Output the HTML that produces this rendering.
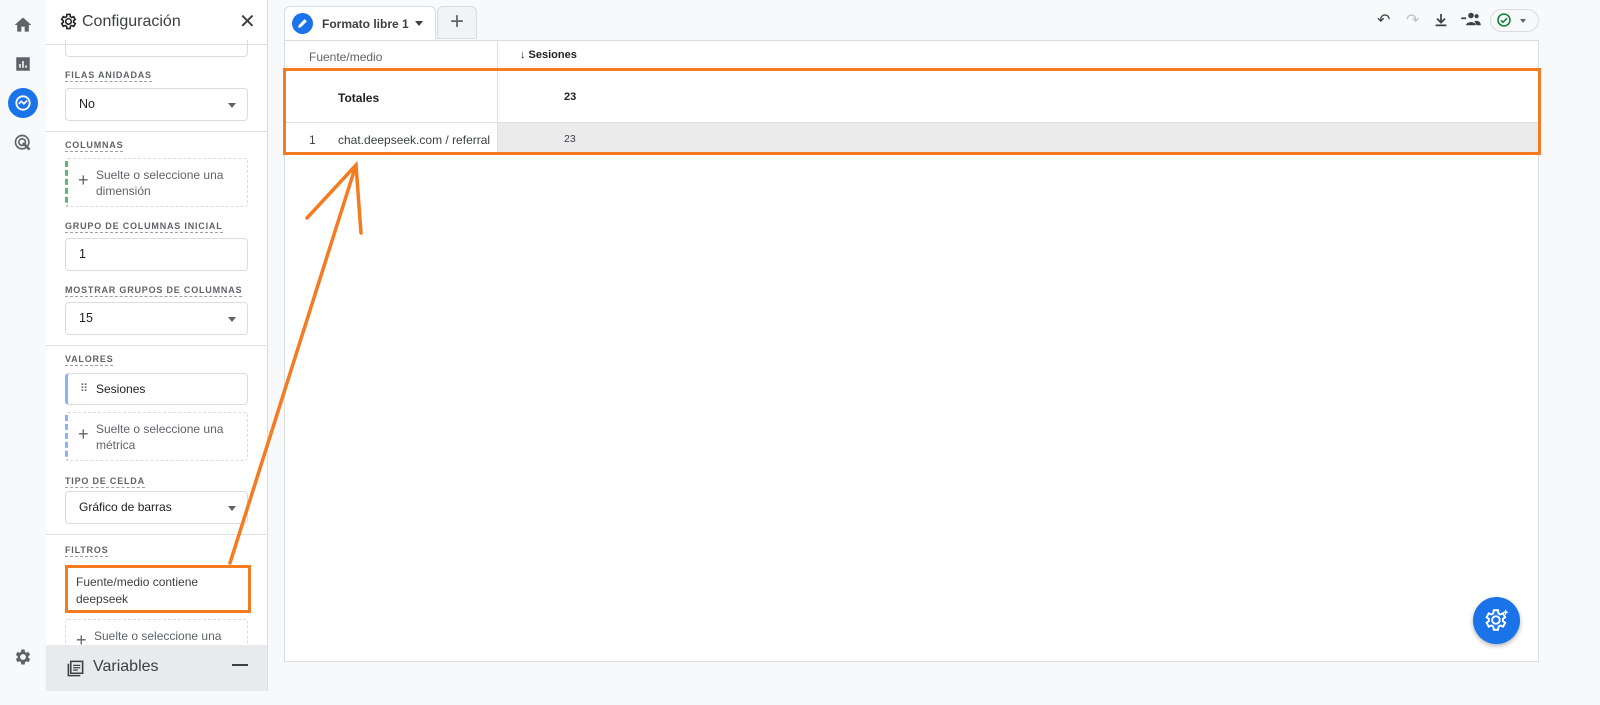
<!DOCTYPE html>
<html><head><meta charset="utf-8"><style>
*{box-sizing:border-box;margin:0;padding:0}
body{width:1600px;height:705px;overflow:hidden;background:#f8f9fa;font-family:"Liberation Sans",Arial,sans-serif;color:#202124;position:relative}
.abs{position:absolute}
.rail{left:0;top:0;width:46px;height:705px;background:#f8f9fa}
.side{left:46px;top:0;width:222px;height:691px;background:#fff;border-right:1px solid #dadce0;overflow:hidden}
.lbl{position:absolute;left:19px;font-size:9px;letter-spacing:.8px;color:#5f6368;font-weight:bold;border-bottom:1px dashed #9aa0a6;padding-bottom:1px}
.box{position:absolute;left:19px;width:183px;border:1px solid #dadce0;border-radius:4px;font-size:12.5px;color:#202124;padding-left:13px}
.dash{position:absolute;left:19px;width:183px;border:1px dashed #dadce0;border-radius:3px;font-size:12px;color:#5f6368;padding:8px 0 0 28px;line-height:16px}
.sep{position:absolute;left:0;width:222px;border-top:1px solid #e0e0e0}
.caret{position:absolute;right:11px;top:50%;margin-top:-2px;border:4px solid transparent;border-top:5px solid #5f6368;border-bottom:0}
.plus{position:absolute;left:10px;font-size:18px;color:#5f6368}
.card{left:284px;top:40px;width:1255px;height:622px;background:#fff;border:1px solid #dadce0}
</style></head><body>
<div class="abs rail">
<svg class="abs" style="left:13px;top:15px" width="20" height="20" viewBox="0 0 24 24"><path d="M10 20v-6h4v6h5v-8h3L12 3 2 12h3v8z" fill="#5f6368"/></svg>
<svg class="abs" style="left:14px;top:55px" width="18" height="18" viewBox="0 0 24 24"><path d="M3 3h18v18H3z" fill="#5f6368"/><path d="M7 17v-5h2v5zM11 17V8h2v9zM15 17v-3h2v3z" fill="#fff"/></svg>
<div class="abs" style="left:8px;top:88px;width:30px;height:30px;border-radius:50%;background:#1a73e8"></div>
<svg class="abs" style="left:13px;top:93px" width="20" height="20" viewBox="0 0 24 24"><circle cx="12" cy="12" r="8" fill="none" stroke="#fff" stroke-width="2.2"/><path d="M7 13l3-3 3 3 4-4" fill="none" stroke="#fff" stroke-width="2"/></svg>
<svg class="abs" style="left:13px;top:133px" width="20" height="20" viewBox="0 0 24 24"><circle cx="11" cy="11" r="8" fill="none" stroke="#5f6368" stroke-width="2"/><circle cx="11" cy="11" r="4" fill="none" stroke="#5f6368" stroke-width="2"/><path d="M12 12l8 8" stroke="#5f6368" stroke-width="3"/></svg>
<svg class="abs" style="left:13px;top:647px" width="20" height="20" viewBox="0 0 24 24"><path d="M19.4 13a7.5 7.5 0 000-2l2.1-1.6-2-3.5-2.5 1a7 7 0 00-1.7-1L15 3h-4l-.4 2.9a7 7 0 00-1.7 1l-2.5-1-2 3.5L6.5 11a7.5 7.5 0 000 2l-2.1 1.6 2 3.5 2.5-1a7 7 0 001.7 1L11 21h4l.4-2.9a7 7 0 001.7-1l2.5 1 2-3.5zM13 15.5a3.5 3.5 0 110-7 3.5 3.5 0 010 7z" fill="#5f6368" transform="translate(-1 0)"/></svg>
</div>
<div class="abs side">
<div class="abs" style="left:0;top:0;width:222px;height:45px;border-bottom:1px solid #e0e0e0"></div>
<svg class="abs" style="left:13px;top:12px" width="19" height="19" viewBox="0 0 24 24"><path d="M19.4 13a7.5 7.5 0 000-2l2.1-1.6-2-3.5-2.5 1a7 7 0 00-1.7-1L15 3h-4l-.4 2.9a7 7 0 00-1.7 1l-2.5-1-2 3.5L6.5 11a7.5 7.5 0 000 2l-2.1 1.6 2 3.5 2.5-1a7 7 0 001.7 1L11 21h4l.4-2.9a7 7 0 001.7-1l2.5 1 2-3.5zM13 15.5a3.5 3.5 0 110-7 3.5 3.5 0 010 7z" fill="none" stroke="#202124" stroke-width="2" transform="translate(-1 0)"/></svg>
<div class="abs" style="left:36px;top:13px;font-size:16px;color:#3c4043">Configuración</div>
<div class="abs" style="left:193px;top:9px;font-size:20px;color:#3c4043">✕</div>
<div class="box" style="top:40px;height:17px;border-top:0;border-radius:0 0 4px 4px"></div>
<div class="lbl" style="top:70px">FILAS ANIDADAS</div>
<div class="box" style="top:88px;height:33px;line-height:31px">No<span class="caret"></span></div>
<div class="sep" style="top:131px"></div>
<div class="lbl" style="top:140px">COLUMNAS</div>
<div class="dash" style="top:158px;height:49px;border-left:3px dashed #5bb974">Suelte o seleccione una dimensión<span class="plus" style="top:13px">+</span></div>
<div class="lbl" style="top:221px">GRUPO DE COLUMNAS INICIAL</div>
<div class="box" style="top:238px;height:33px;line-height:31px">1</div>
<div class="lbl" style="top:285px">MOSTRAR GRUPOS DE COLUMNAS</div>
<div class="box" style="top:302px;height:33px;line-height:31px">15<span class="caret"></span></div>
<div class="sep" style="top:345px"></div>
<div class="lbl" style="top:354px">VALORES</div>
<div class="box" style="top:373px;height:32px;line-height:30px;border-left:3px solid #8ab4f8;padding-left:28px;font-size:12px">Sesiones<span class="abs" style="left:12px;top:0;font-size:11px;color:#5f6368">⠿</span></div>
<div class="dash" style="top:412px;height:49px;border-left:3px dashed #8ab4f8">Suelte o seleccione una métrica<span class="plus" style="top:13px">+</span></div>
<div class="lbl" style="top:476px">TIPO DE CELDA</div>
<div class="box" style="top:491px;height:33px;line-height:31px;font-size:12px">Gráfico de barras<span class="caret"></span></div>
<div class="sep" style="top:534px"></div>
<div class="lbl" style="top:545px">FILTROS</div>
<div class="abs" style="left:19px;top:565px;width:186px;height:48px;border:3px solid #f47b20;font-size:12px;color:#3c4043;padding:6px 0 0 8px;line-height:17px">Fuente/medio contiene deepseek</div>
<div class="dash" style="top:619px;height:40px;padding-top:8px">Suelte o seleccione una<span class="plus" style="top:12px">+</span></div>
</div>
<div class="abs" style="left:46px;top:645px;width:221px;height:46px;background:#e8eaed"></div>
<svg class="abs" style="left:66px;top:659px" width="19" height="19" viewBox="0 0 24 24"><path d="M6 3h15v15H6z M3 6v15h15" fill="none" stroke="#3c4043" stroke-width="2"/><path d="M9 8h9M9 11h9M9 14h6" stroke="#3c4043" stroke-width="1.6"/></svg>
<div class="abs" style="left:93px;top:658px;font-size:16px;color:#3c4043">Variables</div>
<div class="abs" style="left:232px;top:664px;width:16px;height:2px;background:#3c4043"></div>
<div class="abs" style="left:0;top:691px;width:1600px;height:14px;background:#f8f9fa"></div>

<div class="abs" style="left:284px;top:6px;width:152px;height:35px;background:#fff;border:1px solid #dadce0;border-bottom:0;border-radius:6px 6px 0 0"></div>
<div class="abs" style="left:292px;top:13px;width:21px;height:21px;border-radius:50%;background:#1a73e8"></div>
<svg class="abs" style="left:296px;top:17px" width="13" height="13" viewBox="0 0 24 24"><path d="M4 20l1-5L16 4l4 4L9 19z" fill="#fff"/></svg>
<div class="abs" style="left:322px;top:17px;font-size:12px;font-weight:bold;color:#3c4043">Formato libre 1</div>
<div class="abs" style="left:415px;top:21px;border:4px solid transparent;border-top:5px solid #3c4043"></div>
<div class="abs" style="left:437px;top:6px;width:40px;height:33px;background:#f1f3f4;border:1px solid #dadce0;border-radius:6px 6px 0 0;font-size:24px;color:#5f6368;text-align:center;line-height:30px">+</div>
<div class="abs" style="left:1377px;top:10px;font-size:16px;color:#3c4043">↶</div>
<div class="abs" style="left:1406px;top:10px;font-size:16px;color:#bdc1c6">↷</div>
<svg class="abs" style="left:1433px;top:12px" width="16" height="16" viewBox="0 0 24 24"><path d="M12 3v12M6 10l6 6 6-6M4 20h16" fill="none" stroke="#3c4043" stroke-width="2.6"/></svg>
<svg class="abs" style="left:1460px;top:12px" width="22" height="14" viewBox="0 0 30 20"><path d="M1 9h7" stroke="#3c4043" stroke-width="2.5"/><circle cx="15" cy="5" r="4" fill="#3c4043"/><circle cx="23" cy="6" r="3" fill="#3c4043"/><path d="M8 19c0-6 14-6 14 0zM20 13c4-1 9 0 9 6h-6" fill="#3c4043"/></svg>
<div class="abs" style="left:1490px;top:9px;width:49px;height:23px;border:1px solid #dadce0;border-radius:12px;background:#f8f9fa"></div>
<svg class="abs" style="left:1496px;top:12px" width="16" height="16" viewBox="0 0 24 24"><circle cx="12" cy="12" r="9" fill="none" stroke="#188038" stroke-width="2.4"/><path d="M7.5 12.5l3 3 6-6" fill="none" stroke="#188038" stroke-width="2.4"/></svg>
<div class="abs" style="left:1520px;top:19px;border:3.5px solid transparent;border-top:4px solid #5f6368"></div>

<div class="abs card"></div>
<div class="abs" style="left:497px;top:41px;width:1px;height:112px;background:#e0e0e0"></div>
<div class="abs" style="left:309px;top:50px;font-size:12px;color:#5f6368">Fuente/medio</div>
<div class="abs" style="left:520px;top:49px;font-size:11px;font-weight:bold;color:#202124">↓ Sesiones</div>
<div class="abs" style="left:285px;top:122px;width:1253px;height:1px;background:#e0e0e0"></div>
<div class="abs" style="left:498px;top:123px;width:1040px;height:30px;background:#ebebeb"></div>
<div class="abs" style="left:338px;top:91px;font-size:12px;font-weight:bold">Totales</div>
<div class="abs" style="left:564px;top:91px;font-size:11px;font-weight:bold">23</div>
<div class="abs" style="left:309px;top:133px;font-size:12px;color:#3c4043">1</div>
<div class="abs" style="left:338px;top:133px;font-size:12px;color:#3c4043">chat.deepseek.com / referral</div>
<div class="abs" style="left:564px;top:133px;font-size:10.5px;color:#3c4043">23</div>
<div class="abs" style="left:283px;top:68px;width:1258px;height:87px;border:3.5px solid #f47b20"></div>
<svg class="abs" style="left:0;top:0" width="1600" height="705"><g stroke="#f47b20" stroke-width="3.5" fill="none" stroke-linecap="round"><path d="M230 563L356 165M307 218L356 165L361 233"/></g></svg>
<div class="abs" style="left:1473px;top:597px;width:47px;height:47px;border-radius:50%;background:#1a73e8;box-shadow:0 2px 5px rgba(0,0,0,.3)"></div>
<svg class="abs" style="left:1484px;top:607px" width="26" height="26" viewBox="0 0 24 24"><path d="M17.4 13a7.5 7.5 0 000-2l2.1-1.6-2-3.5-2.5 1a7 7 0 00-1.7-1L13 3H9l-.4 2.9a7 7 0 00-1.7 1l-2.5-1-2 3.5L4.5 11a7.5 7.5 0 000 2l-2.1 1.6 2 3.5 2.5-1a7 7 0 001.7 1L9 21h4l.4-2.9a7 7 0 001.7-1l2.5 1 2-3.5zM11 15.5a3.5 3.5 0 110-7 3.5 3.5 0 010 7z" fill="none" stroke="#fff" stroke-width="1.8"/><path d="M20 2l.8 2 2 .8-2 .8L20 7.6l-.8-2-2-.8 2-.8z" fill="#fff"/></svg>
</body></html>
